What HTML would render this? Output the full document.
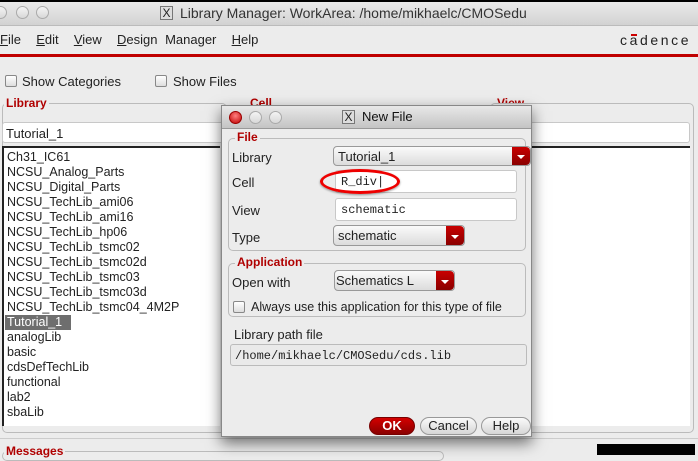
<!DOCTYPE html>
<html><head><style>
*{box-sizing:border-box;margin:0;padding:0}
body{width:698px;height:455px;overflow:hidden;background:#ececec;font-family:"Liberation Sans",sans-serif;font-size:12px;color:#222;position:relative}
.a{position:absolute}
.lbl{color:#b00000;font-weight:bold;font-size:12px;background:#ececec;padding:0 2px}
.grp{border:1px solid #bbb;border-radius:5px}
.field{background:#fff;border:1px solid #c8c8c8;border-radius:3px}
.dd{background:linear-gradient(#fafafa,#dcdcdc);border:1px solid #999;border-radius:4px}
.arr{position:absolute;right:0;top:0;bottom:0;width:18px;background:linear-gradient(#c80000,#8a0000);border-radius:0 4px 4px 0}
.arr:after{content:"";position:absolute;left:5px;top:45%;border-left:4px solid transparent;border-right:4px solid transparent;border-top:4px solid #fff}
.mono{font-family:"Liberation Mono",monospace;font-size:12px}
.circ{width:13px;height:13px;border-radius:50%;border:1px solid #aaa;background:linear-gradient(#f4f4f4,#d8d8d8);position:absolute}
.cb{width:12px;height:12px;border:1px solid #888;border-radius:2px;background:linear-gradient(#fff,#ddd);position:absolute}
.btn{position:absolute;height:18px;border-radius:9px;border:1px solid #999;background:linear-gradient(#fafafa,#d6d6d6);text-align:center;line-height:16px;font-size:13px}
</style></head><body>
<div class="a" style="left:0;top:0;width:698px;height:2px;background:#000"></div>
<div class="a" style="left:0;top:2px;width:698px;height:24px;background:linear-gradient(#eaeaea,#d2d2d2);border-bottom:1px solid #bbb"></div>
<div class="circ" style="left:-6px;top:6px"></div><div class="circ" style="left:16px;top:6px"></div><div class="circ" style="left:36px;top:6px"></div>
<div class="a" style="left:160px;top:6px;width:13px;height:14px;border:1px solid #777;background:#ddd;font-size:12px;line-height:12px;text-align:center">X</div>
<div class="a" style="left:180px;top:5px;font-size:14px;color:#333">Library Manager: WorkArea: /home/mikhaelc/CMOSedu</div>
<div class="a" style="left:0;top:32px;font-size:13px;word-spacing:4px"><u>F</u>ile &nbsp;<u>E</u>dit &nbsp;<u>V</u>iew &nbsp;<u>D</u>esign Manager &nbsp;<u>H</u>elp</div>
<div class="a" style="left:620px;top:32px;font-size:14px;letter-spacing:2.6px;color:#222">cadence</div>
<div class="a" style="left:631px;top:34px;width:6px;height:2px;background:#c00"></div>
<div class="a" style="left:0;top:54px;width:698px;height:3px;background:#c00000"></div>
<div class="cb" style="left:5px;top:75px"></div><div class="a" style="left:22px;top:74px;font-size:13px">Show Categories</div>
<div class="cb" style="left:155px;top:75px"></div><div class="a" style="left:173px;top:74px;font-size:13px">Show Files</div>
<div class="a grp" style="left:2px;top:103px;width:225px;height:330px"></div>
<div class="a lbl" style="left:4px;top:96px">Library</div>
<div class="a lbl" style="left:248px;top:96px">Cell</div>
<div class="a lbl" style="left:495px;top:96px">View</div>
<div class="a grp" style="left:490px;top:103px;width:204px;height:330px;background:#ececec"></div>
<div class="a field" style="left:2px;top:122px;width:225px;height:21px;padding:3px 3px;font-size:13px">Tutorial_1</div>
<div class="a field" style="left:530px;top:122px;width:160px;height:21px"></div>
<div class="a" style="left:2px;top:146px;width:218px;height:280px;background:#fff;border-left:2px solid #222;border-top:2px solid #222;font-size:12.5px;line-height:15px;padding:2px 0 0 3px">
Ch31_IC61<br>NCSU_Analog_Parts<br>NCSU_Digital_Parts<br>NCSU_TechLib_ami06<br>NCSU_TechLib_ami16<br>NCSU_TechLib_hp06<br>NCSU_TechLib_tsmc02<br>NCSU_TechLib_tsmc02d<br>NCSU_TechLib_tsmc03<br>NCSU_TechLib_tsmc03d<br>NCSU_TechLib_tsmc04_4M2P<br><span style="background:#6e6e6e;color:#fff;display:inline-block;width:66px;margin-left:-2px;padding-left:2px">Tutorial_1</span><br>analogLib<br>basic<br>cdsDefTechLib<br>functional<br>lab2<br>sbaLib</div>
<div class="a" style="left:530px;top:146px;width:160px;height:280px;background:#fff;border-top:2px solid #222"></div>
<div class="a" style="left:0;top:438px;width:698px;height:1px;background:#ccc"></div>
<div class="a grp" style="left:2px;top:451px;width:442px;height:10px"></div>
<div class="a lbl" style="left:4px;top:444px">Messages</div>
<div class="a" style="left:597px;top:444px;width:98px;height:11px;background:#000"></div>
<!-- dialog -->
<div class="a" style="left:221px;top:105px;width:311px;height:332px;background:#ececec;border:1px solid #888;box-shadow:0 6px 14px rgba(0,0,0,.55)">
<div class="a" style="left:0;top:0;width:309px;height:23px;background:linear-gradient(#e8e8e8,#c4c4c4);border-bottom:1px solid #999"></div>
<div class="circ" style="left:7px;top:5px;background:radial-gradient(circle at 50% 35%,#ff8080,#c00000);border-color:#900"></div>
<div class="circ" style="left:27px;top:5px"></div><div class="circ" style="left:47px;top:5px"></div>
<div class="a" style="left:120px;top:4px;width:13px;height:14px;border:1px solid #777;background:#ddd;font-size:12px;line-height:12px;text-align:center">X</div>
<div class="a" style="left:140px;top:3px;font-size:13px;color:#111">New File</div>
<div class="a grp" style="left:6px;top:32px;width:298px;height:113px"></div>
<div class="a lbl" style="left:13px;top:24px">File</div>
<div class="a" style="left:10px;top:44px;font-size:13px">Library</div>
<div class="a dd" style="left:111px;top:40px;width:198px;height:20px;padding:2px 4px;font-size:13px">Tutorial_1<div class="arr"></div></div>
<div class="a" style="left:10px;top:69px;font-size:13px">Cell</div>
<div class="a field mono" style="left:113px;top:64px;width:182px;height:23px;padding:4px 5px">R_div|</div>
<div class="a" style="left:98px;top:63px;width:80px;height:25px;border:3px solid #e00;border-radius:50%;box-shadow:0 1px 2px rgba(0,0,0,.4)"></div>
<div class="a" style="left:10px;top:97px;font-size:13px">View</div>
<div class="a field mono" style="left:113px;top:92px;width:182px;height:23px;padding:4px 5px">schematic</div>
<div class="a" style="left:10px;top:124px;font-size:13px">Type</div>
<div class="a dd" style="left:111px;top:119px;width:132px;height:21px;padding:2px 4px;font-size:13px">schematic<div class="arr"></div></div>
<div class="a grp" style="left:6px;top:157px;width:298px;height:54px"></div>
<div class="a lbl" style="left:13px;top:149px">Application</div>
<div class="a" style="left:10px;top:169px;font-size:13px">Open with</div>
<div class="a dd" style="left:112px;top:164px;width:121px;height:21px;padding:2px 1px;font-size:13px">Schematics L<div class="arr"></div></div>
<div class="cb" style="left:11px;top:195px"></div>
<div class="a" style="left:29px;top:194px;font-size:12.5px">Always use this application for this type of file</div>
<div class="a" style="left:12px;top:221px;font-size:13px">Library path file</div>
<div class="a mono" style="left:8px;top:238px;width:297px;height:22px;border:1px solid #bbb;border-radius:3px;padding:4px 4px;background:#eaeaea">/home/mikhaelc/CMOSedu/cds.lib</div>
<div class="btn" style="left:147px;top:311px;width:46px;background:linear-gradient(#d40000,#8a0000);border-color:#700;color:#fff;font-weight:bold">OK</div>
<div class="btn" style="left:198px;top:311px;width:57px">Cancel</div>
<div class="btn" style="left:259px;top:311px;width:50px">Help</div>
</div>
</body></html>
